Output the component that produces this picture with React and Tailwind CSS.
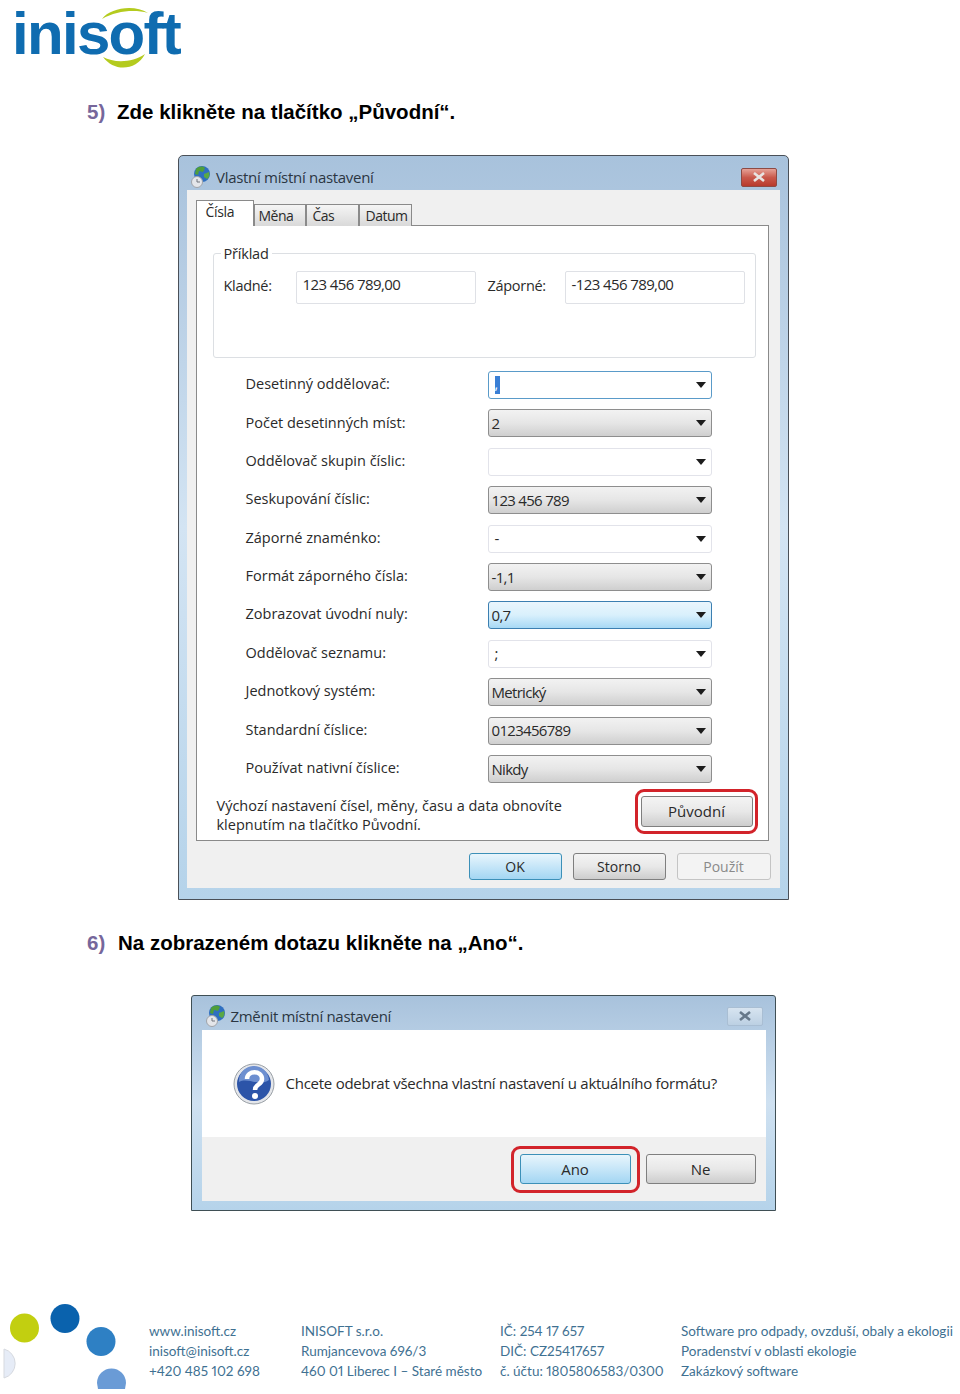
import React from 'react';

const win = "font-['Open_Sans','Noto_Sans',sans-serif] text-[#2a2a2a]";

const rows = [
	{ label: 'Desetinný oddělovač:', value: ',', type: 'focus' },
	{ label: 'Počet desetinných míst:', value: '2', type: 'gray' },
	{ label: 'Oddělovač skupin číslic:', value: '', type: 'white' },
	{ label: 'Seskupování číslic:', value: '123 456 789', type: 'gray' },
	{ label: 'Záporné znaménko:', value: '-', type: 'white' },
	{ label: 'Formát záporného čísla:', value: '-1,1', type: 'gray' },
	{ label: 'Zobrazovat úvodní nuly:', value: '0,7', type: 'blue' },
	{ label: 'Oddělovač seznamu:', value: ';', type: 'white' },
	{ label: 'Jednotkový systém:', value: 'Metrický', type: 'gray' },
	{ label: 'Standardní číslice:', value: '0123456789', type: 'gray' },
	{ label: 'Používat nativní číslice:', value: 'Nikdy', type: 'gray' },
];

const comboStyles = {
	gray: 'border-[#8e8e8e] bg-gradient-to-b from-[#f2f2f2] via-[#e6e6e6] to-[#cfcfcf]',
	white: 'border-[#e2e3ea] bg-white',
	focus: 'border-[#5a9bc9] bg-white',
	blue: 'border-[#3c7fb1] bg-gradient-to-b from-[#eaf6fd] via-[#d9f0fc] to-[#a7d9f5]',
};

function Globe() {
	return (
		<svg width="22" height="24" viewBox="0 0 22 24">
			<circle cx="12" cy="9" r="8" fill="#2f6fc0" />
			<path d="M6 4 C9 1 13 1 15 3 L13 7 L9 6 L8 10 L5 9 Z" fill="#4f9e3a" />
			<path d="M14 9 L19 7 C20 10 19 13 17 14 L14 12 Z" fill="#5aa845" />
			<circle cx="7" cy="17" r="5.5" fill="#e4e6ea" stroke="#a0a4aa" />
			<path d="M7 14 V17 H10" stroke="#70757c" fill="none" />
		</svg>
	);
}

function Caret() {
	return (
		<svg width="10" height="6" viewBox="0 0 10 6" className="mr-[4px] shrink-0">
			<polygon points="0,0 10,0 5,6" fill="#1c1c1c" />
		</svg>
	);
}

function Combo({ value, type }) {
	return (
		<div className={`w-[224px] h-[28px] flex items-center justify-between pl-[3px] pr-[1px] rounded-[3px] border ${comboStyles[type]}`}>
			{type === 'focus' ? (
				<span className="ml-[3px] w-[5px] h-[18px] bg-[#3a7fd5] text-white text-[14px] leading-[16px]">{value}</span>
			) : (
				<span className={`text-[15px] tracking-[-0.7px] ${type === 'white' ? 'ml-[3px]' : ''}`}>{value}</span>
			)}
			<Caret />
		</div>
	);
}

function Button({ label, type = 'gray', className = '' }) {
	const styles = {
		gray: 'border-[#7f7f7f] bg-gradient-to-b from-[#f4f4f4] via-[#e8e8e8] to-[#cdcdcd] text-[#2a2a2a]',
		blue: 'border-[#3c90b8] bg-gradient-to-b from-[#e8f5fc] via-[#c6e6f8] to-[#a3d6f3] text-[#2a2a2a]',
		disabled: 'border-[#c4c4c4] bg-[#f3f3f3] text-[#8a8a8a]',
	};
	return (
		<div className={`flex items-center justify-center rounded-[3px] border text-[14px] ${styles[type]} ${className}`}>
			{label}
		</div>
	);
}

function Titlebar({ title, closeDisabled }) {
	return (
		<div className="flex items-center justify-between">
			<div className="flex items-center gap-[4px]">
				<Globe />
				<span className="text-[15px] tracking-[-0.3px] text-[#2b3642]">{title}</span>
			</div>
			<div
				className={`w-[36px] h-[19px] flex items-center justify-center rounded-[2px] border ${
					closeDisabled
						? 'border-[#a9bed3] bg-gradient-to-b from-[#d7e4f0] to-[#bcd0e3]'
						: 'border-[#8d4a44] bg-gradient-to-b from-[#e5a197] via-[#c9584b] to-[#b8392c]'
				}`}
			>
				<svg width="14" height="10" viewBox="0 0 14 10">
					<path
						d="M2 1 L12 9 M12 1 L2 9"
						stroke={closeDisabled ? '#66788a' : '#e8e4e2'}
						strokeWidth="2.6"
					/>
				</svg>
			</div>
		</div>
	);
}

function Heading({ num, text, gap }) {
	return (
		<div className="flex items-center ml-[87px] h-[24px] font-['Liberation_Sans',sans-serif] font-bold text-[20.5px]">
			<span className={`text-[#76679b] ${gap}`}>{num}</span>
			<span className="text-black">{text}</span>
		</div>
	);
}

function Tab({ label, className }) {
	return (
		<div className={`${className} h-[22px] flex items-center border border-b-0 border-[#8a8a8a] bg-gradient-to-b from-[#f5f5f5] to-[#d9d9d9] text-[14px] tracking-[-0.5px]`}>
			{label}
		</div>
	);
}

function Readout({ label, value, labelW }) {
	return (
		<div className="flex items-center">
			<span className={`${labelW} text-[14.5px] tracking-[-0.3px] pb-[3px]`}>{label}</span>
			<div className="w-[180px] h-[33px] pl-[6px] pt-[1px] border border-[#dfe1e6] rounded-[2px] text-[15px] tracking-[-0.6px]">
				{value}
			</div>
		</div>
	);
}

const footer = [
	{ w: 'w-[152px]', lines: ['www.inisoft.cz', 'inisoft@inisoft.cz', '+420 485 102 698'] },
	{ w: 'w-[199px]', lines: ['INISOFT s.r.o.', 'Rumjancevova 696/3', '460 01 Liberec I – Staré město'] },
	{ w: 'w-[181px]', lines: ['IČ: 254 17 657', 'DIČ: CZ25417657', 'č. účtu: 1805806583/0300'] },
	{ w: 'w-[279px]', lines: ['Software pro odpady, ovzduší, obaly a ekologii', 'Poradenství v oblasti ekologie', 'Zakázkový software'] },
];

export default function App() {
	return (
		<div className="w-[960px] h-[1394px] bg-white overflow-hidden flex flex-col">
			{/* logo */}
			<div className="relative ml-[12px] mt-[1px] h-[72px] w-[174px]">
				<span className="block font-['Liberation_Sans',sans-serif] font-bold text-[60px] leading-[66px] tracking-[-1.7px] text-[#0f6cb0]">
					inisoft
				</span>
				<svg width="172" height="72" viewBox="0 0 172 72" className="absolute left-[2px] top-0">
					<path d="M88 18 C96 7 120 3 134 12 C120 8 102 10 88 18 Z" fill="#b4cb1e" />
					<path d="M89 56 C100 62 118 62 131 53 C122 70 100 71 89 56 Z" fill="#b4cb1e" />
				</svg>
			</div>

			<div className="mt-[27px]">
				<Heading num="5)" text="Zde klikněte na tlačítko „Původní“." gap="w-[30px]" />
			</div>

			{/* first dialog */}
			<div className={`${win} mt-[31px] ml-[178px] w-[611px] h-[745px] border-[1.5px] border-[#4a5058] rounded-t-[5px] bg-gradient-to-b from-[#a8c2dc] via-[#d3e4f3] to-[#b5d3ea] px-[8px] pb-[11px] flex flex-col`}>
				<div className="h-[34px] pt-[9px] pl-[3px] pr-[3px]">
					<Titlebar title="Vlastní místní nastavení" />
				</div>
				<div className="flex-1 bg-[#f0f0f0] px-[8.5px] pt-[10px] flex flex-col">
					<div className="flex items-end h-[26px] relative z-10 -mb-[1px]">
						<div className="w-[58px] h-[26px] pl-[9px] border border-b-0 border-[#8a8a8a] bg-white text-[14px] tracking-[-0.3px]">
							Čísla
						</div>
						<Tab label="Měna" className="w-[52px] pl-[4px]" />
						<Tab label="Čas" className="w-[53px] pl-[6px]" />
						<Tab label="Datum" className="w-[53px] pl-[6px]" />
					</div>
					<div className="w-[573px] h-[616px] border border-[#8a8a8a] bg-white px-[16px] pt-[27px]">
						<div className="relative w-[543px] h-[105px] border border-[#dcdfe3] rounded-[3px] pl-[10px] pt-[17px]">
							<span className="absolute left-[7px] -top-[10px] px-[3px] bg-white text-[14.5px] leading-[20px] tracking-[-0.2px]">
								Příklad
							</span>
							<div className="flex">
								<Readout label="Kladné:" value="123 456 789,00" labelW="w-[72px]" />
								<div className="ml-[12px]">
									<Readout label="Záporné:" value="-123 456 789,00" labelW="w-[77px]" />
								</div>
							</div>
						</div>
						<div className="mt-[13px] flex flex-col gap-[10.4px] pl-[33px]">
							{rows.map((row) => (
								<div key={row.label} className="flex items-center">
									<span className="w-[242px] text-[14.5px] pb-[2px]">{row.label}</span>
									<Combo value={row.value} type={row.type} />
								</div>
							))}
						</div>
						<div className="mt-[13px] pl-[4px] flex">
							<div className="w-[418.5px] shrink-0 text-[14.5px] leading-[19px]">
								<p>Výchozí nastavení čísel, měny, času a data obnovíte</p>
								<p>klepnutím na tlačítko Původní.</p>
							</div>
							<div className="w-[123px] h-[45px] shrink-0 -mt-[7px] border-[3px] border-[#d2232a] rounded-[9px] flex items-center justify-center">
								<Button label="Původní" className="w-[112px] h-[31px] text-[15px]" />
							</div>
						</div>
					</div>
					<div className="mt-[12px] flex gap-[11px] justify-end w-[575px]">
						<Button label="OK" type="blue" className="w-[93px] h-[27px]" />
						<Button label="Storno" className="w-[93px] h-[27px]" />
						<Button label="Použít" type="disabled" className="w-[94px] h-[27px]" />
					</div>
				</div>
			</div>

			<div className="mt-[31px]">
				<Heading num="6)" text="Na zobrazeném dotazu klikněte na „Ano“." gap="w-[31px]" />
			</div>

			{/* second dialog */}
			<div className={`${win} mt-[40px] ml-[191px] w-[585px] h-[216px] border-[1.5px] border-[#3f4f55] rounded-t-[3px] bg-gradient-to-b from-[#a8c2dc] via-[#cfe1f1] to-[#b5d3ea] px-[9.5px] pb-[9px] flex flex-col`}>
				<div className="h-[34px] pt-[8px] pl-[3px] pr-[3px]">
					<Titlebar title="Změnit místní nastavení" closeDisabled />
				</div>
				<div className="h-[107px] bg-white flex items-center pl-[31px] gap-[11px]">
					<svg width="42" height="42" viewBox="0 0 42 42">
						<circle cx="21" cy="21" r="20" fill="#e4e6ea" stroke="#9aa0a6" />
						<circle cx="21" cy="21" r="17" fill="#2c54a8" />
						<path d="M6 19 A15 15 0 0 1 36 17 C26 24 15 14 6 19 Z" fill="#6d8fd0" />
						<path d="M14 16 C14 7 29 7 29 16 C29 22 22 21 22 27" stroke="#ffffff" strokeWidth="4.5" fill="none" />
						<circle cx="22" cy="33" r="3" fill="#ffffff" />
					</svg>
					<span className="text-[15px] tracking-[-0.25px]">
						Chcete odebrat všechna vlastní nastavení u aktuálního formátu?
					</span>
				</div>
				<div className="flex-1 bg-[#f0f0f0] flex items-center justify-end pr-[10px] gap-[6px]">
					<div className="w-[129px] h-[47px] border-[3px] border-[#d2232a] rounded-[9px] flex items-center justify-center">
						<Button label="Ano" type="blue" className="w-[111px] h-[30px] text-[15px]" />
					</div>
					<Button label="Ne" className="w-[110px] h-[30px] text-[15px]" />
				</div>
			</div>

			{/* footer */}
			<div className="mt-[89px] relative flex h-[94px] pl-[149px] pt-[21px] font-['Lato','Open_Sans',sans-serif] text-[13.5px] leading-[20px] proportional-nums text-[#3f7192]">
				<svg width="130" height="90" viewBox="0 0 130 90" className="absolute left-0 top-0">
					<circle cx="24.5" cy="28" r="14.5" fill="#c2cf10" />
					<circle cx="65" cy="18.5" r="14.5" fill="#0a62ad" />
					<circle cx="101" cy="41.5" r="14.5" fill="#2e80c4" />
					<path d="M4 49 A15 15 0 0 1 4 78 Z" fill="#e6ecf7" stroke="#d6d9df" />
					<path d="M97 83 A14.5 14.5 0 0 1 126 83 L125 89 L98 89 Z" fill="#6a9bd6" />
				</svg>
				{footer.map((col) => (
					<div key={col.lines[0]} className={`${col.w} shrink-0 whitespace-nowrap`}>
						{col.lines.map((line) => (
							<div key={line}>{line}</div>
						))}
					</div>
				))}
			</div>
		</div>
	);
}
